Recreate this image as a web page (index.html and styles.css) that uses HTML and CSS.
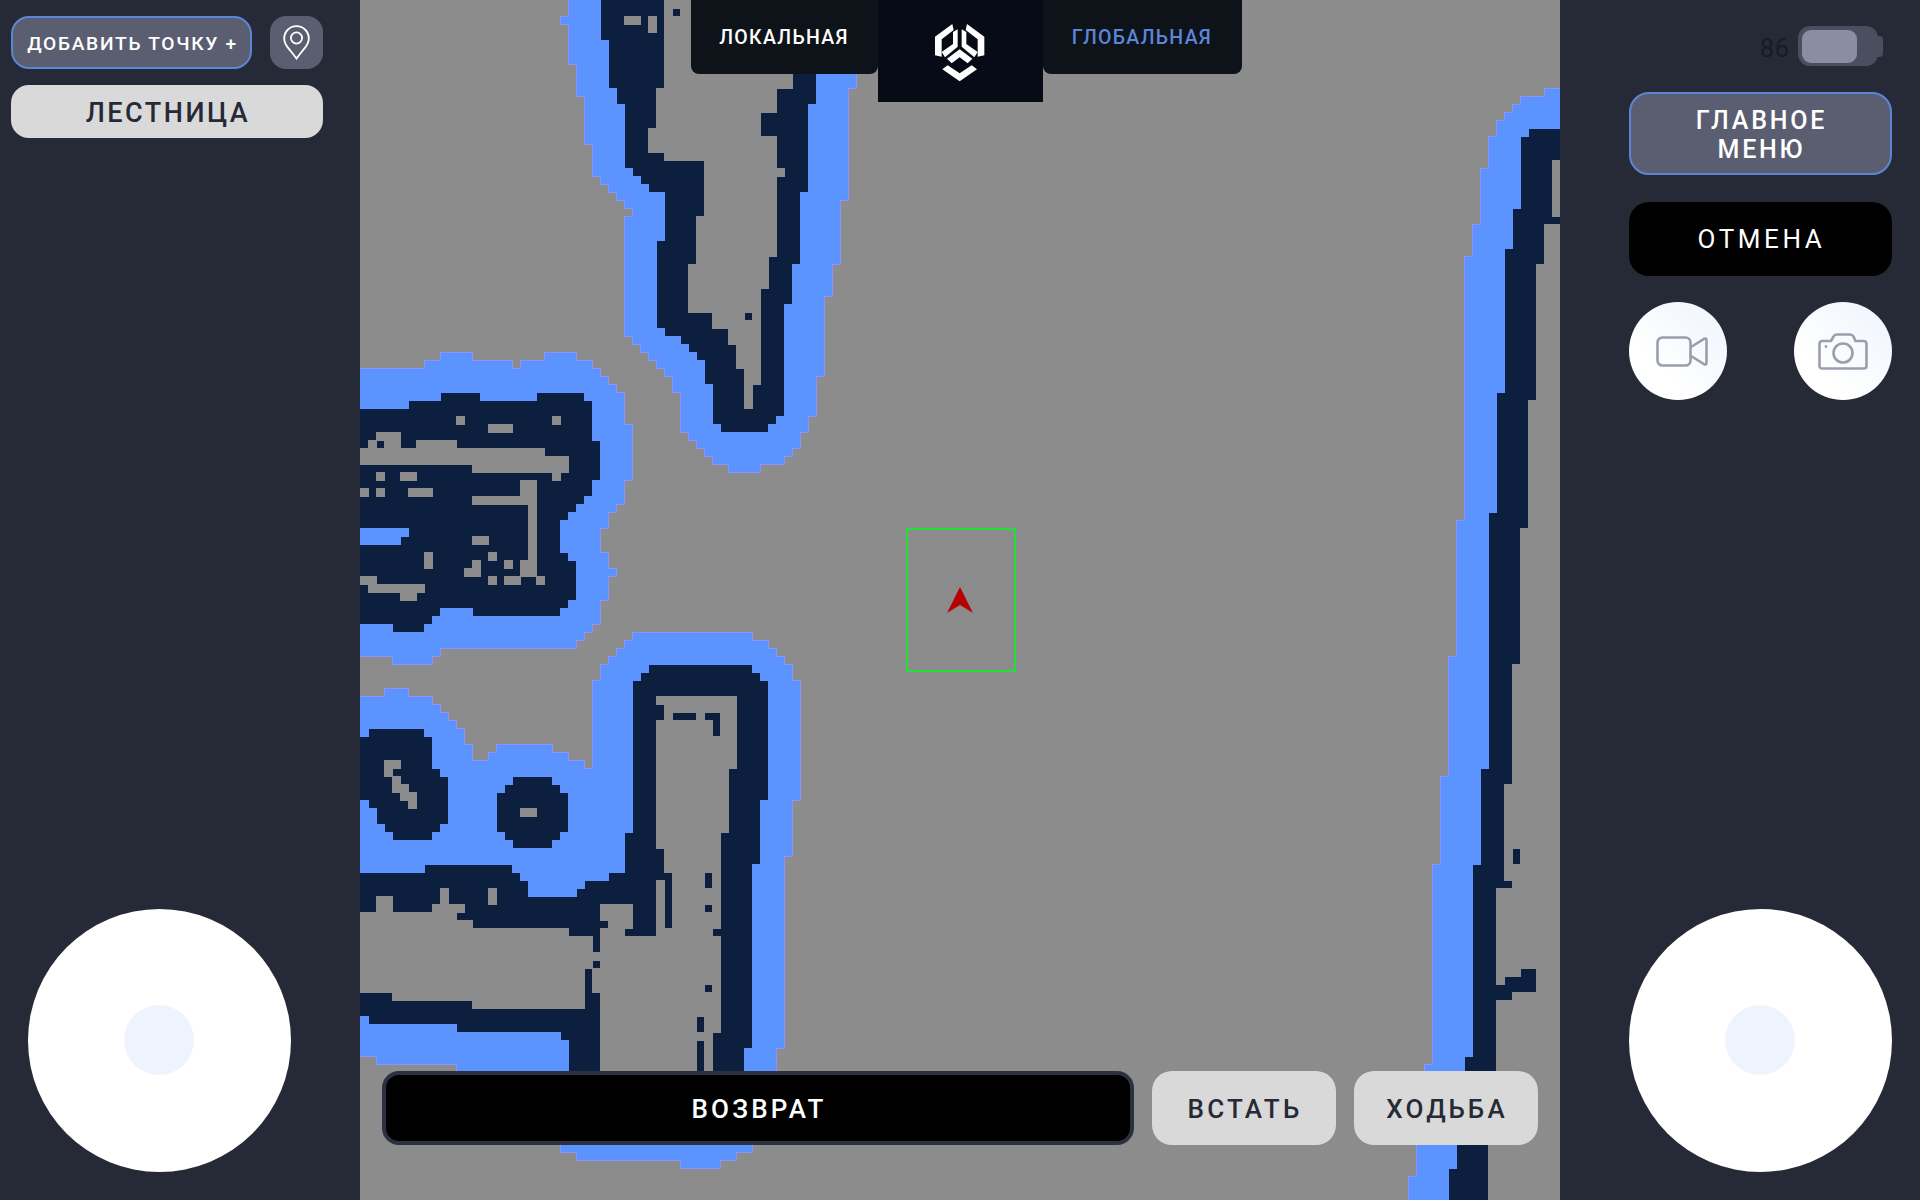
FILE: index.html
```html
<!DOCTYPE html>
<html lang="ru">
<head>
<meta charset="utf-8">
<title>Карта</title>
<link rel="stylesheet" href="styles.css">
</head>
<body>
<div class="app">
  <aside class="side side-left">
    <div class="point-row">
      <button class="btn btn-accent btn-add">ДОБАВИТЬ ТОЧКУ +</button>
      <button class="btn btn-pin" aria-label="Точка">
        <svg class="pin" viewBox="0 0 27 35"><path d="M13.5 1.2C6.6 1.2 1.2 6.6 1.2 13.4c0 3.4 1.5 6.2 3.7 9.2 2.7 3.6 6 7.2 8.6 11 2.6-3.8 5.9-7.4 8.6-11 2.2-3 3.7-5.8 3.7-9.2C25.8 6.6 20.4 1.2 13.5 1.2z"/><circle cx="13.5" cy="13" r="5.6"/></svg>
      </button>
    </div>
    <button class="btn btn-light btn-ladder">ЛЕСТНИЦА</button>
    <div class="joystick joystick-left"><div class="knob"></div></div>
  </aside>

  <main class="map">
    <svg class="map-svg" viewBox="360 0 1200 1200">
      <defs>
        <filter id="cells" filterUnits="userSpaceOnUse" primitiveUnits="userSpaceOnUse" x="360" y="0" width="1200" height="1200" color-interpolation-filters="sRGB">
          <feFlood x="364" y="4" width="1" height="1"/>
          <feComposite x="360" y="0" width="8" height="8"/>
          <feTile x="360" y="0" width="1200" height="1200" result="grid"/>
          <feComposite in="SourceGraphic" in2="grid" operator="in"/>
          <feMorphology operator="dilate" radius="4"/>
          <feGaussianBlur stdDeviation="0.6"/>
        </filter>
      </defs>
      <rect class="m-gray" x="360" y="0" width="1200" height="1200"/>

      <g class="cells" filter="url(#cells)">
      <rect class="m-gray" x="360" y="0" width="1200" height="1200"/>
      <!-- upper corridor -->
      <g transform="translate(560 0) scale(.33333)">
        <polygon class="m-blue" points="20,0 10,60 30,130 40,230 70,310 85,440 100,520 210,640 185,760 190,960 215,1030 340,1130 370,1300 460,1390 560,1420 660,1390 750,1290 780,1160 800,920 830,790 860,550 865,300 885,250 885,0"/>
        <polygon class="m-navy" points="125,0 125,100 145,120 150,240 170,310 190,320 190,490 280,575 325,590 325,715 300,725 300,975 430,1075 435,1140 460,1160 460,1250 510,1300 610,1300 660,1250 660,1190 680,1170 680,920 705,910 705,800 725,800 725,580 750,570 750,310 775,300 775,0"/>
        <polygon class="m-gray" points="320,0 320,265 300,270 300,380 275,385 275,445 325,490 390,490 400,468 430,500 430,590 410,600 435,610 435,640 410,650 410,765 385,770 410,790 385,810 385,900 410,910 385,930 445,945 450,980 500,1000 525,1040 525,1100 550,1105 550,1215 570,1215 570,1150 595,1140 595,880 620,870 620,765 640,760 640,540 665,530 665,500 640,490 640,470 660,470 660,270 690,260 690,0"/>
        <path class="m-gray" d="M205 45h30v25h-30zM255 50h45v45h-25v30h-20zM230 135h20v60h-20zM255 205h20v60h-20zM280 0h20v40h-20z"/>
        <path class="m-navy" d="M342 22h24v22h-24zM612 338h24v66h-24zM545 945h24v22h-24z"/>
      </g>

      <!-- left block -->
      <g transform="translate(360 340) scale(.33333)">
        <polygon class="m-blue" points="0,100 30,85 200,75 270,40 340,40 350,60 470,75 570,40 630,40 690,60 780,145 800,230 830,340 800,450 720,590 760,700 720,830 650,920 570,935 280,920 180,980 120,975 100,955 0,960"/>
        <polygon class="m-navy" points="0,200 220,195 250,150 360,150 360,175 490,175 510,195 540,150 650,150 695,205 695,310 720,320 720,410 690,420 690,460 610,530 605,640 650,670 650,770 605,820 340,820 340,800 250,800 195,865 95,865 90,845 0,840"/>
        <polygon class="m-blue" points="0,555 160,555 110,620 0,620"/>
        <polygon class="m-gray" points="0,325 30,320 60,285 105,285 150,310 280,310 300,330 490,335 520,330 630,355 610,420 585,410 585,395 340,395 330,370 0,370"/>
        <polygon class="m-gray" points="335,465 490,460 490,425 520,420 540,450 540,485 520,490 520,705 480,705 475,670 495,660 495,490 340,490"/>
        <polygon class="m-gray" points="310,695 345,665 380,710 345,712 310,712"/>
        <polygon class="m-gray" points="0,715 50,710 60,730 130,745 165,735 185,745 160,775 135,780 130,758 30,758 0,735"/>
        <path class="m-gray" d="M288 236h28v28h-28zM380 258h72v28h-72zM582 236h28v28h-28zM42 394h28v28h-28zM132 394h28v28h-28zM0 441h24v26h-24zM42 441h28v26h-28zM155 441h72v26h-72zM335 596h50v28h-50zM380 642h28v28h-28zM424 664h28v28h-28zM380 708h28v28h-28zM424 708h50v28h-50zM536 708h28v28h-28zM200 642h28v50h-28z"/>
        <path class="m-navy" d="M42 308h24v24h-24zM135 308h22v22h-22z"/>
      </g>

      <!-- lower rooms -->
      <g transform="translate(360 620) scale(.33333 .36996)">
        <polygon class="m-blue" points="0,215 100,190 190,205 300,280 340,385 370,385 410,350 480,330 600,350 690,405 695,200 720,140 810,50 880,30 1140,25 1200,50 1280,100 1325,190 1325,470 1305,490 1305,640 1280,650 1280,1130 1260,1150 1260,1230 1190,1420 1080,1470 1075,1490 970,1490 960,1470 680,1470 600,1430 590,1230 310,1215 70,1195 0,1170"/>
        <polygon class="m-navy" points="0,340 30,295 175,295 225,345 225,410 270,445 270,520 205,590 100,590 50,530 40,500 0,470"/>
        <polygon class="m-navy" points="405,490 455,435 580,435 630,490 630,565 580,610 455,610 405,565"/>
        <polygon class="m-gray" points="65,400 95,370 135,375 105,395 110,420 185,485 150,515 100,450"/>
        <rect class="m-gray" x="490" y="512" width="50" height="23"/>
        <polygon class="m-navy" points="0,680 130,680 135,695 180,690 205,660 445,660 490,705 495,735 540,760 625,760 680,700 785,695 790,580 810,575 810,180 860,130 1170,130 1215,175 1215,490 1190,500 1190,650 1165,660 1165,1160 1140,1170 1140,1240 610,1240 635,1180 630,1130 600,1120 300,1115 290,1095 50,1095 0,1065"/>
        <polygon class="m-gray" points="0,795 200,795 230,770 330,770 290,810 360,835 540,835 700,855 720,855 720,1035 680,1040 650,1050 340,1040 330,1020 90,1020 85,1000 0,1000"/>
        <polygon class="m-gray" points="900,205 1125,205 1125,410 1100,420 1100,570 1080,590 1080,1115 1060,1125 1060,1240 720,1240 720,775 810,775 810,840 790,855 895,855 895,620 900,265"/>
        <path class="m-gray" d="M240 735h30v25h-30zM380 735h28v25h-28zM60 755h35v25h-35z"/>
        <path class="m-navy" d="M895 230h25v35h-25zM945 252h70v16h-70zM1040 252h40v16h-40zM1060 268h20v42h-20zM1100 410h25v20h-25zM1100 440h25v10h-25zM1080 575h25v15h-25zM1080 600h25v12h-25zM875 620h25v15h-25zM875 650h25v20h-25zM875 680h25v15h-25zM920 695h25v140h-25zM1032 695h26v22h-26zM1032 776h26v22h-26zM1032 978h26v22h-26zM1058 843h22v12h-22zM1010 1080h25v40h-25zM1015 1145h20v90h-20zM698 860h20v35h-20zM680 940h20v80h-20zM700 925h20v20h-20zM700 1000h20v20h-20zM715 820h30v14h-30z"/>
      </g>

      <!-- right wall -->
      <g transform="translate(1400 80) scale(.33333 .35714)">
        <polygon class="m-blue" points="480,30 440,35 370,55 280,140 275,190 255,200 250,375 230,390 225,490 205,495 205,880 185,890 185,1240 165,1245 165,1608 145,1628 145,1948 120,1958 120,2198 100,2213 100,2738 75,2763 55,2983 55,3058 30,3078 30,3150 200,3150 200,2800 240,2780 240,2200 300,2180 300,1600 340,1200 340,800 380,500 420,300 450,200 450,140 480,140"/>
        <polygon class="m-navy" points="480,135 415,135 370,175 370,365 345,370 345,470 325,475 325,865 300,870 300,1220 278,1225 278,1598 258,1608 258,1938 235,1943 235,2193 210,2198 210,2733 190,2743 170,2983 170,3048 145,3058 145,3150 250,3150 255,2988 295,2768 295,2568 325,2568 345,2563 385,2563 412,2540 412,2505 395,2485 360,2485 355,2505 325,2510 320,2525 295,2530 295,2268 320,2218 320,1978 340,1973 340,1638 365,1638 365,1265 385,1260 385,905 410,900 410,510 430,505 430,400 480,400 480,380 455,380 455,250 480,250"/>
        <path class="m-gray" d="M450 218h30v22h-30z"/>
        <path class="m-navy" d="M342 2166h26v26h-26zM295 2248h30v18h-30z"/>
      </g>
      </g>

      <!-- robot -->
      <rect class="robot-box" x="907" y="529" width="108" height="142"/>
      <polygon class="robot-arrow" points="960,587 973,613 960,605 947,613"/>
    </svg>

    <div class="tabs">
      <button class="tab tab-local">ЛОКАЛЬНАЯ</button>
      <div class="logo-box">
        <svg class="logo" viewBox="0 0 210 210">
          <polygon points="30,118 30,62 82,24 86,42 50,70 50,122"/>
          <polygon points="84,48 98,40 98,92 60,124 50,108 84,84"/>
          <polygon points="124,48 110,40 110,92 148,124 158,108 124,84"/>
          <polygon points="178,118 178,62 126,24 122,42 158,70 158,122"/>
          <polygon points="104,100 142,128 128,142 104,124 80,142 66,128"/>
          <polygon points="52,160 68,148 104,172 140,148 156,160 104,196"/>
        </svg>
      </div>
      <button class="tab tab-global">ГЛОБАЛЬНАЯ</button>
    </div>

    <div class="actions">
      <button class="btn btn-black btn-return">ВОЗВРАТ</button>
      <button class="btn btn-light btn-action">ВСТАТЬ</button>
      <button class="btn btn-light btn-action">ХОДЬБА</button>
    </div>
  </main>

  <aside class="side side-right">
    <div class="battery-row">
      <span class="battery-value">86</span>
      <div class="battery"><div class="battery-fill"></div></div>
    </div>
    <button class="btn btn-accent btn-menu">ГЛАВНОЕ<br>МЕНЮ</button>
    <button class="btn btn-cancel">ОТМЕНА</button>
    <div class="media-row">
      <button class="media" aria-label="Видео">
        <svg class="icon-video" viewBox="0 0 52 31"><rect x="1.5" y="1.5" width="33" height="28" rx="5"/><path d="M35 11 48 2.8q2.500-1 2.500 1.500v22.400q0 2.500-2.500 1.500L35 20"/></svg>
      </button>
      <button class="media" aria-label="Фото">
        <svg class="icon-camera" viewBox="0 0 50 37"><path d="M4.500 8h8.500l2.500-4.500q1-2 3.500-2h13q2.500 0 3.500 2L37.500 8h8q3 0 3 3v22q0 2.500-3 2.500h-41q-3 0-3-2.500V11q0-3 3-3z"/><circle cx="25" cy="20" r="9.500"/><circle class="dot" cx="8" cy="13.500" r="1"/></svg>
      </button>
    </div>
    <div class="joystick"><div class="knob"></div></div>
  </aside>
</div>
</body>
</html>
```

FILE: styles.css
```css
* { box-sizing: border-box; }
html, body { margin: 0; padding: 0; }
body { width: 1920px; height: 1200px; overflow: hidden; background: #252a36; font-family: Roboto, "Noto Sans", sans-serif; }
button { font-family: inherit; padding: 0; border: 0; margin: 0; cursor: pointer; }

.app { display: grid; grid-template-columns: 360px 1200px 360px; height: 1200px; }

.side { display: flex; flex-direction: column; background: #252a36; height: 1200px; }
.side-left { padding: 16px 37px 28px 11px; }
.side-right { padding: 26px 28px 28px 69px; }

.btn { display: flex; align-items: center; justify-content: center; border-radius: 16px; padding: 2px 0 0 2px; }
.btn-accent { background: #5b5e70; border: 2px solid #5b86d8; color: #fff; font-weight: 500; }
.btn-light { background: #d9d9d9; color: #252a36; }
.btn-black { background: #000; border: 4px solid #2c3140; color: #fff; }

.point-row { display: flex; gap: 18px; }
.btn-add { width: 241px; height: 53px; font-size: 19.2px; letter-spacing: 1.7px; border-radius: 18px; }
.btn-pin { width: 53px; height: 53px; background: #5b5e70; border-radius: 16px; padding: 0; }
.pin { width: 27px; height: 35px; fill: none; stroke: #fff; stroke-width: 1.8; }
.btn-ladder { height: 53px; margin-top: 16px; font-size: 27px; letter-spacing: 2.5px; font-weight: 500; border-radius: 18px; }

.joystick { position: relative; display: flex; align-items: center; justify-content: center; width: 263px; height: 263px; border-radius: 50%; background: #fff; margin-top: auto; }
.joystick-left { margin-left: 17px; }
.knob { width: 70px; height: 70px; margin: -1px 0 0 -1px; border-radius: 50%; background: #eef4fe; }

.map { position: relative; width: 1200px; height: 1200px; overflow: hidden; background: #8c8c8c; }
.map-svg { position: absolute; left: 0; top: 0; width: 1200px; height: 1200px; display: block; }
.cells polygon, .cells path, .cells rect { shape-rendering: crispEdges; }
.m-gray { fill: #8c8c8c; }
.m-blue { fill: #5b93ff; }
.m-navy { fill: #0d1f3f; stroke: #0d1f3f; stroke-width: 6; }
.robot-box { fill: none; stroke: #22e03a; stroke-width: 2; }
.robot-arrow { fill: #b90000; }

.tabs { position: absolute; top: 0; left: 0; right: 0; display: grid; grid-template-columns: 1fr 165px 1fr; align-items: start; }
.tab { height: 74px; background: #0e1219; border-radius: 0 0 8px 8px; font-size: 19.5px; font-weight: 500; letter-spacing: 1.3px; }
.tab-local { width: 187px; justify-self: end; color: #fff; }
.tab-global { width: 199px; justify-self: start; color: #5b86d8; }
.logo-box { height: 102px; background: #060b16; display: flex; align-items: center; justify-content: center; }
.logo { width: 70px; height: 70px; fill: #fff; }

.actions { position: absolute; left: 22px; right: 22px; bottom: 55px; display: flex; gap: 18px; }
.btn-return { flex: 1; height: 74px; font-size: 26px; font-weight: 500; letter-spacing: 3.2px; border-radius: 17px; padding: 2px 0 0 2px; }
.btn-action { width: 184px; height: 74px; font-size: 26px; font-weight: 500; letter-spacing: 3.2px; border-radius: 20px; }

.battery-row { display: flex; align-items: center; justify-content: flex-end; gap: 9px; height: 40px; margin-right: 9px; }
.battery-value { font-size: 26px; color: #171b26; margin-top: 4px; }
.battery { position: relative; width: 85px; height: 40px; padding: 4px; }
.battery::before { content: ""; position: absolute; left: 0; top: 0; width: 80px; height: 40px; background: #4b4e5e; border-radius: 12px; }
.battery::after { content: ""; position: absolute; right: 0; top: 10px; width: 8px; height: 21px; background: #4b4e5e; border-radius: 0 4px 4px 0; }
.battery-fill { position: relative; z-index: 1; width: 55px; height: 33px; background: #8b8ea2; border-radius: 9px; }

.btn-menu { height: 83px; margin-top: 26px; padding-top: 3px; font-size: 25px; line-height: 29px; letter-spacing: 2.8px; border-radius: 20px; }
.btn-cancel { height: 74px; margin-top: 27px; padding-top: 0; background: #000; color: #fff; font-size: 26px; font-weight: 400; letter-spacing: 3.6px; border-radius: 20px; }

.media-row { display: flex; justify-content: space-between; margin-top: 26px; }
.media { display: flex; align-items: center; justify-content: center; width: 98px; height: 98px; border-radius: 50%; background: linear-gradient(45deg, #fff 30%, #eef3fd); }
.icon-video { width: 52px; height: 31px; margin-left: 7px; fill: none; stroke: #9a9eae; stroke-width: 2.6; stroke-linejoin: round; }
.icon-camera { width: 50px; height: 37px; fill: none; stroke: #9a9eae; stroke-width: 2.6; stroke-linejoin: round; }
.icon-camera .dot { fill: #9a9eae; stroke-width: 1; }
```
